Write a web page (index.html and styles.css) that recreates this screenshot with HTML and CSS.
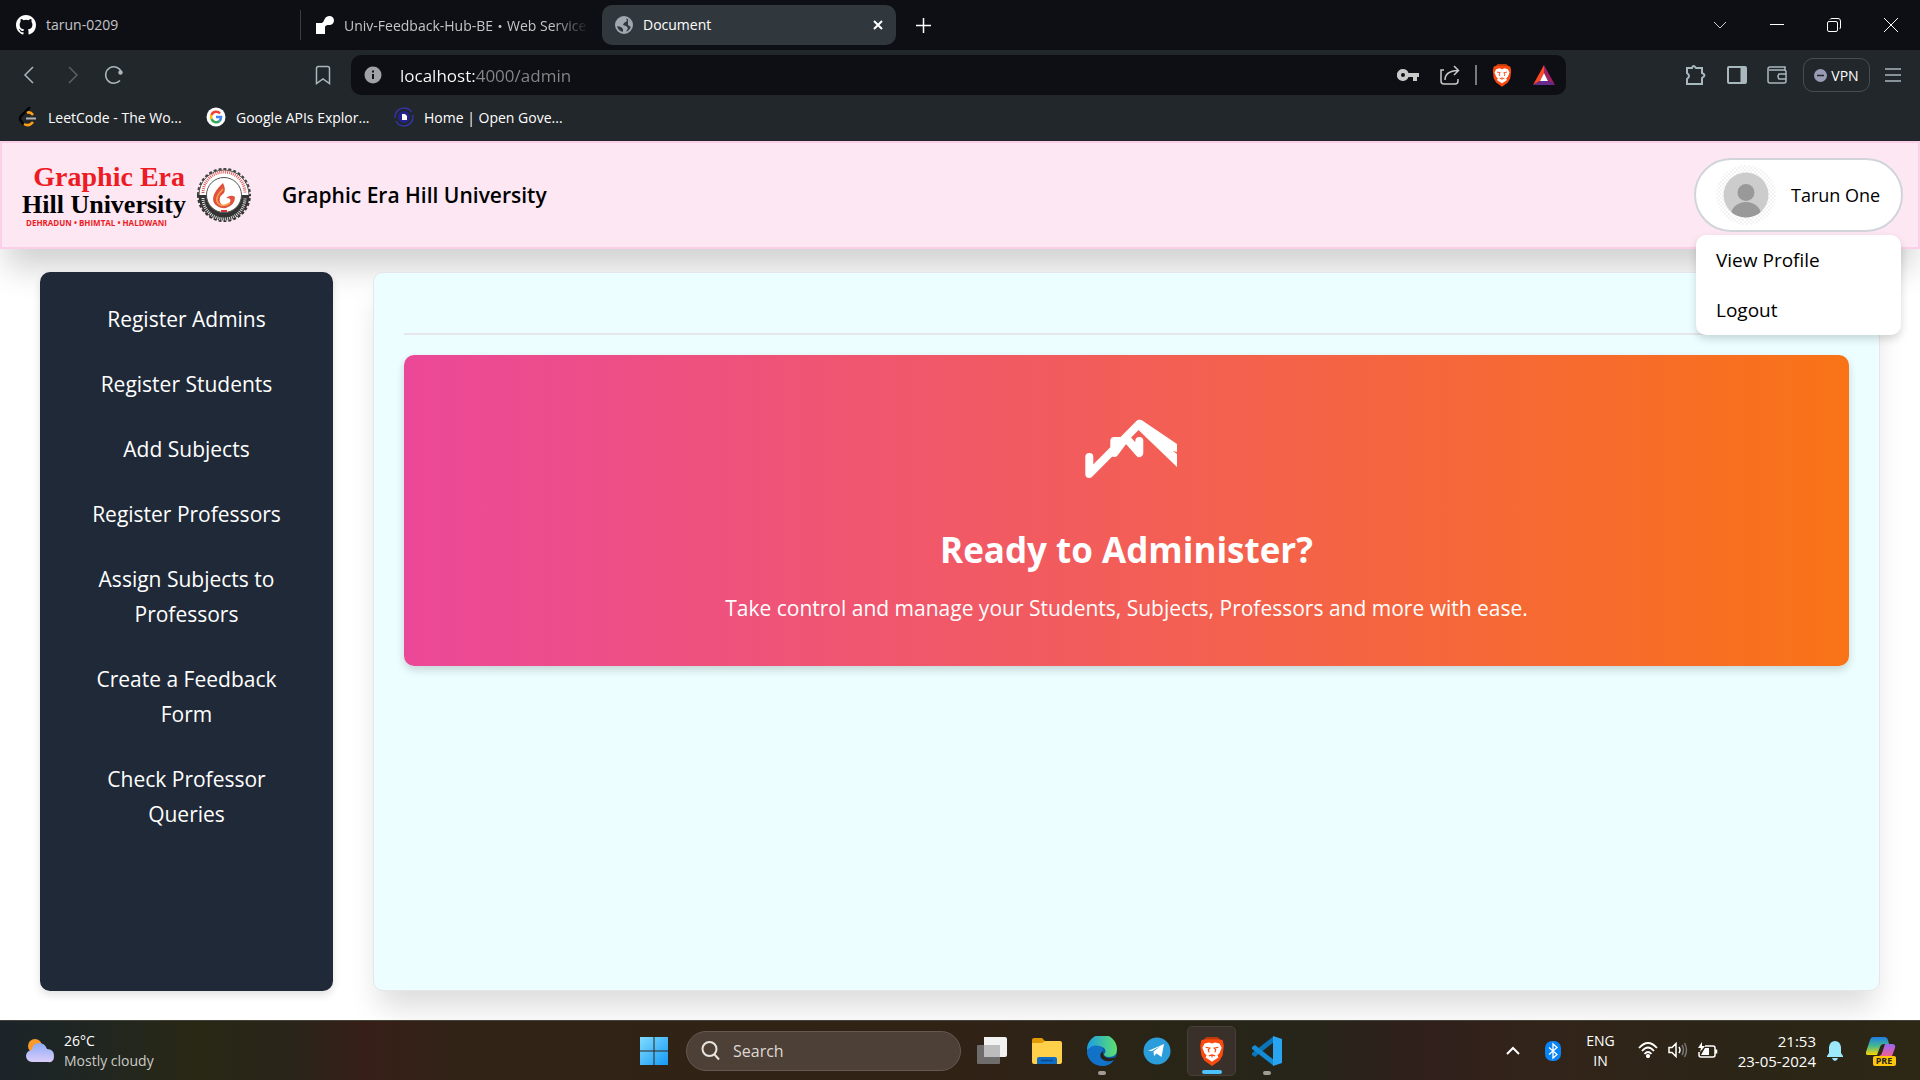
FILE: index.html
```html
<!DOCTYPE html>
<html lang="en">
<head>
<meta charset="utf-8">
<meta name="viewport" content="width=device-width, initial-scale=1">
<title>Document</title>
<link rel="stylesheet" href="styles.css">
</head>
<body>
<svg width="0" height="0" class="defs" aria-hidden="true">
  <symbol id="lion" viewBox="0 0 24 28">
    <path d="M7 1h10l2 2 3 1 1 5-1 9-3 5-7 5-7-5-3-5L1 9l1-5 3-1z" fill="#fb4a10"/>
    <path d="M7 1h10l2 2H5z" fill="#b93a08"/>
    <path d="M5 7l4-1 3 1 3-1 4 1 2 4-2 5-2 2 1 2-3 2-3 2-3-2-3-2 1-2-2-2-2-5z" fill="#fff"/>
    <path d="M6 10.500l4 .8-1.500 1.500.8 2.500M18 10.500l-4 .8 1.500 1.500-.8 2.500M9 18.500l3-1 3 1M12 17.500v2.500" fill="none" stroke="#fb4a10" stroke-width="1.100"/>
  </symbol>
</svg>

<header class="browser">
  <div class="tabs">
    <button class="tab tab-first" type="button">
      <svg width="20" height="20" viewBox="0 0 16 16" fill="#fff"><path d="M8 0C3.58 0 0 3.58 0 8c0 3.54 2.29 6.53 5.47 7.59.4.07.55-.17.55-.38 0-.19-.01-.82-.01-1.49-2.01.37-2.53-.49-2.69-.94-.09-.23-.48-.94-.82-1.13-.28-.15-.68-.52-.01-.53.63-.01 1.08.58 1.23.82.72 1.21 1.87.87 2.33.66.07-.52.28-.87.51-1.07-1.78-.2-3.64-.89-3.64-3.95 0-.87.31-1.59.82-2.15-.08-.2-.36-1.02.08-2.12 0 0 .67-.21 2.2.82a7.6 7.6 0 0 1 4 0c1.53-1.04 2.2-.82 2.2-.82.44 1.1.16 1.92.08 2.12.51.56.82 1.27.82 2.15 0 3.07-1.87 3.75-3.65 3.95.29.25.54.73.54 1.48 0 1.07-.01 1.93-.01 2.2 0 .21.15.46.55.38A8 8 0 0 0 16 8c0-4.42-3.58-8-8-8z"/></svg>
      <span class="tab-title">tarun-0209</span>
    </button>
    <button class="tab tab-second" type="button">
      <svg width="18" height="18" viewBox="0 0 18 18" fill="#fff"><path d="M0 7h5c1 0 1.500 0 2.500-1.500C8.500 4 9 0 13.500 0A4.500 4.500 0 0 1 13.500 9C11 9 9 9 9 12v6H0z"/></svg>
      <span class="tab-title fade">Univ-Feedback-Hub-BE<span class="wide-dot">・</span>Web Service</span>
    </button>
    <div class="tab tab-active">
      <svg width="18" height="18" viewBox="0 0 18 18"><circle cx="9" cy="9" r="8" fill="#31383d" stroke="#a3a8b0" stroke-width="2"/><path d="M2 4l5-3 4 1 1 3-3 2-1 2 3 1 2 2-2 4-3 1v-4l-2-2-4-1zM13 3l4 5-1 3-3-2z" fill="#a3a8b0"/></svg>
      <span class="tab-title">Document</span>
      <button class="plain" type="button" aria-label="Close tab"><svg width="10" height="10" viewBox="0 0 10 10" stroke="#fff" stroke-width="2"><path d="M1 1l8 8M9 1l-8 8"/></svg></button>
    </div>
    <button class="plain new-tab" type="button" aria-label="New tab"><svg width="15" height="15" viewBox="0 0 15 15" stroke="#fff" stroke-width="1.500"><path d="M7.500 0v15M0 7.500h15"/></svg></button>
    <div class="window-controls">
      <button class="plain" type="button" aria-label="Search tabs"><svg width="14" height="14" viewBox="0 0 14 14" fill="none" stroke="#ccc"><path d="M1 4l6 6 6-6"/></svg></button>
      <button class="plain" type="button" aria-label="Minimize"><svg width="14" height="14" viewBox="0 0 14 14" stroke="#fff"><path d="M0 6.500h14"/></svg></button>
      <button class="plain" type="button" aria-label="Restore"><svg width="14" height="14" viewBox="0 0 14 14" fill="none" stroke="#fff"><rect x=".5" y="3.500" width="10" height="10" rx="1.500"/><path d="M3 1.500Q3.500.5 5 .5h6Q13.500.5 13.500 3v6q0 1.500-1 2"/></svg></button>
      <button class="plain" type="button" aria-label="Close"><svg width="14" height="14" viewBox="0 0 14 14" stroke="#fff"><path d="M0 0l14 14M14 0L0 14"/></svg></button>
    </div>
  </div>

  <div class="toolbar">
    <div class="nav-buttons">
      <button class="plain" type="button" aria-label="Back"><svg width="20" height="20" viewBox="0 0 20 20" fill="none" stroke="#a9b8bf" stroke-width="1.500"><path d="M13 2l-8 8 8 8"/></svg></button>
      <button class="plain" type="button" aria-label="Forward"><svg width="20" height="20" viewBox="0 0 20 20" fill="none" stroke="#596267" stroke-width="1.500"><path d="M7 2l8 8-8 8"/></svg></button>
      <button class="plain" type="button" aria-label="Reload"><svg width="20" height="20" viewBox="0 0 20 20" fill="none" stroke="#a9b8bf" stroke-width="1.500"><path d="M16 15.500A8.200 8.200 0 1 1 17.500 7"/><circle cx="16.500" cy="7.500" r="2.200" fill="#a9b8bf" stroke="none"/></svg></button>
    </div>
    <button class="plain" type="button" aria-label="Bookmark"><svg width="20" height="20" viewBox="0 0 20 20" fill="none" stroke="#a9b8bf" stroke-width="1.500"><path d="M3.500 18.500v-15q0-2 2-2h9q2 0 2 2v15L10 14z"/></svg></button>
    <div class="address">
      <svg width="18" height="18" viewBox="0 0 18 18"><circle cx="9" cy="9" r="8.500" fill="#9fa2a6"/><path d="M9 8v5M9 4.500v2" stroke="#111217" stroke-width="2"/></svg>
      <input class="url" type="text" value="localhost:4000/admin" aria-label="Address">
      <div class="address-icons">
        <svg width="22" height="14" viewBox="0 0 22 14" fill="#c9c9c9"><path fill-rule="evenodd" d="M6 1a6 6 0 0 1 5.500 4H22v4h-2v4h-4V9h-4.500A6 6 0 1 1 6 1zm0 4a2 2 0 1 0 0 4 2 2 0 0 0 0-4z"/></svg>
        <svg width="20" height="20" viewBox="0 0 20 20" fill="none" stroke="#c9c9c9" stroke-width="1.500"><path d="M4 5H1v11q0 3 3 3h11q3 0 3-3v-2M5 15q0-9 13-9.500M14 1l4.500 4.500L14 10"/></svg>
        <span class="divider"></span>
        <svg width="20" height="24"><use href="#lion"/></svg>
        <svg width="22" height="20" viewBox="0 0 22 20"><path d="M11 0L0 20l7-4 4-8z" fill="#ff4724"/><path d="M11 0l11 20-7-4-4-8z" fill="#9e1f63"/><path d="M0 20h22l-7-4H7z" fill="#662d91"/><path d="M11 8l4 8H7z" fill="#fff"/></svg>
      </div>
    </div>
    <div class="extensions">
      <svg width="22" height="22" viewBox="0 0 22 22" fill="none" stroke="#a9b8bf" stroke-width="2"><path d="M2 4h5q1-4 4 0h6v5q5 2 0 5v6H2v-5q4-3 0-6z"/></svg>
      <svg width="20" height="18" viewBox="0 0 20 18" fill="none" stroke="#a9b8bf" stroke-width="2"><rect x="1" y="1" width="18" height="16" rx="1"/><path d="M16 1v16" stroke-width="5"/></svg>
      <svg width="20" height="18" viewBox="0 0 20 18" fill="none" stroke="#a9b8bf" stroke-width="1.500"><path d="M18 4V1H3Q1 1 1 3v12q0 2 2 2h14q2 0 2-2V6q0-2-2-2H2M19 8h-7q-2 2.500 0 5h7"/></svg>
      <button class="vpn" type="button"><svg width="13" height="13" viewBox="0 0 13 13"><circle cx="6.500" cy="6.500" r="6.500" fill="#9a9bb5"/><path d="M3 6.500h7" stroke="#22272b" stroke-width="1.500"/></svg>VPN</button>
      <button class="plain" type="button" aria-label="Menu"><svg width="16" height="14" viewBox="0 0 16 14" stroke="#a9b8bf" stroke-width="1.500"><path d="M0 1h16M0 7h16M0 13h16"/></svg></button>
    </div>
  </div>

  <nav class="bookmarks">
    <a href="#"><svg width="20" height="20" viewBox="0 0 20 20" fill="none" stroke-width="2.500"><path d="M12 0L3 9q-2 3 0 5l3 4" stroke="#050505"/><path d="M9 6q3-2 6 2M6 17q5 3 9-2" stroke="#ffa116"/><path d="M8 11.500h10" stroke="#b3b3b3" stroke-width="2"/></svg>LeetCode - The Wo...</a>
    <a href="#"><svg width="20" height="20" viewBox="0 0 20 20" fill="none" stroke-width="2.500"><circle cx="10" cy="10" r="9.500" fill="#fff"/><path d="M14 6.500A5 5 0 0 0 5.500 8" stroke="#ea4335"/><path d="M5.500 8q-1 2 0 4" stroke="#fbbc05"/><path d="M5.500 12a5 5 0 0 0 8 2" stroke="#34a853"/><path d="M13.500 14q1.500-1.500 1.500-4h-5" stroke="#4285f4"/></svg>Google APIs Explor...</a>
    <a href="#"><svg width="20" height="20" viewBox="0 0 20 20"><circle cx="10" cy="10" r="9" fill="none" stroke="#3434a4" stroke-width="1.500" stroke-dasharray="24 3"/><circle cx="10" cy="10" r="6" fill="#24248c"/><path d="M8 7h3l2 2v4H8z" fill="#fff"/></svg>Home | Open Gove...</a>
  </nav>
</header>

<div class="page">
  <header class="site-header">
    <div class="logo">
      <div class="logo-text">
        <span class="logo-top">Graphic Era</span>
        <span class="logo-main">Hill University</span>
        <span class="logo-places">DEHRADUN • BHIMTAL • HALDWANI</span>
      </div>
      <svg width="54" height="54" viewBox="0 0 54 54" fill="none">
        <circle cx="27" cy="27" r="25" fill="#fff"/>
        <path d="M2 27a25 25 0 0 1 50 0" stroke="#555" stroke-width="1"/>
        <path d="M1 27a26 26 0 0 1 52 0" stroke="#444" stroke-width="2" stroke-dasharray="3 2"/>
        <path d="M1 27a26 26 0 0 0 52 0" stroke="#333" stroke-width="2" stroke-dasharray="3 2"/>
        <path d="M6 25a21 21 0 0 1 42 0" stroke="#e45a5c" stroke-width="3" stroke-dasharray="1 1"/>
        <path d="M6 27a21 21 0 0 0 42 0" stroke="#333" stroke-width="9"/>
        <path d="M6 30a21 21 0 0 0 42 0" stroke="#ddd" stroke-width="3" stroke-dasharray="1 1"/>
        <circle cx="27" cy="27" r="17.500" fill="#fff" stroke="#555"/>
        <path d="M26 15q-13 12-9 20 4 6 12 5 9-3 9-11-4-3-9 1 6 0 4 4-4 6-9 2-4-6 3-11 2-4-1-10z" fill="#e0523d"/>
        <path d="M26 21q-9 9-5 14 4 5 12 0" stroke="#f5a14d" stroke-width="1.500"/>
        <path d="M24 43h6" stroke="#d33" stroke-width="2"/>
      </svg>
    </div>
    <h1 class="site-title">Graphic Era Hill University</h1>
    <div class="account">
      <button class="profile" type="button">
        <svg width="60" height="60" viewBox="0 0 60 60">
          <defs>
            <pattern id="check" width="4" height="4" patternUnits="userSpaceOnUse"><path d="M0 0h2v2H0zM2 2h2v2H2z" fill="#f3f3f3"/></pattern>
            <clipPath id="face"><circle cx="30" cy="30" r="22.500"/></clipPath>
          </defs>
          <circle cx="30" cy="30" r="30" fill="url(#check)"/>
          <g clip-path="url(#face)"><path d="M7 7h46v46H7z" fill="#ccc"/><circle cx="30" cy="27.500" r="8.500" fill="#999"/><ellipse cx="30" cy="50" rx="15" ry="13" fill="#999"/></g>
        </svg>
        Tarun One
      </button>
      <div class="menu">
        <a href="#">View Profile</a>
        <a href="#">Logout</a>
      </div>
    </div>
  </header>

  <div class="content">
    <nav class="sidebar">
      <a href="#">Register Admins</a>
      <a href="#">Register Students</a>
      <a href="#">Add Subjects</a>
      <a href="#">Register Professors</a>
      <a href="#">Assign Subjects to Professors</a>
      <a href="#">Create a Feedback Form</a>
      <a href="#">Check Professor Queries</a>
    </nav>
    <main class="panel">
      <hr class="rule">
      <section class="hero">
        <svg width="100" height="100" viewBox="0 0 100 100" fill="none" stroke="#fff" stroke-width="8" stroke-linecap="round" stroke-linejoin="round">
          <path d="M12.300 57v17L62 24"/>
          <path d="M37.300 41v12l9-12zM50 39l12.300 14V41"/>
          <path d="M59 22q3-4 7-1l34 23v8l-4-1 4 3v13L62 30.500z" fill="#fff" stroke="none"/>
        </svg>
        <h2>Ready to Administer?</h2>
        <p>Take control and manage your Students, Subjects, Professors and more with ease.</p>
      </section>
    </main>
  </div>
</div>

<footer class="taskbar">
  <div class="weather">
    <svg width="28" height="24" viewBox="0 0 28 24"><defs><linearGradient id="cloud" x2="0" y2="1"><stop stop-color="#8cabf7"/><stop offset="1" stop-color="#dccdfa"/></linearGradient></defs><circle cx="9" cy="7" r="7" fill="#f99a2b"/><path d="M6 23a6 6 0 0 1 0-12q1-7 7-7 6 0 8 6 7 0 7 7t-6 6z" fill="url(#cloud)"/></svg>
    <div><div class="temp">26°C</div><div class="sky">Mostly cloudy</div></div>
  </div>
  <div class="apps">
    <button class="plain" type="button" aria-label="Start"><svg width="30" height="30" viewBox="0 0 30 30"><defs><linearGradient id="win" x2="1" y2="1"><stop stop-color="#7fdcff"/><stop offset="1" stop-color="#1699f5"/></linearGradient></defs><path d="M1 1h13.500v13.500H1zM15.500 1H29v13.500H15.500zM1 15.500h13.500V29H1zM15.500 15.500H29V29H15.500z" fill="url(#win)"/></svg></button>
    <label class="search"><svg width="20" height="20" viewBox="0 0 20 20" fill="none" stroke="#e8e4e0" stroke-width="2"><circle cx="8.500" cy="8" r="7"/><path d="M13.500 13.500L18 18.500"/></svg><input type="text" placeholder="Search" aria-label="Search"></label>
    <button class="plain app" type="button" aria-label="Task view"><svg width="30" height="30" viewBox="0 0 30 30"><path d="M7 1h21q2 0 2 2v16q0 2-2 2H7z" fill="#f2f2f2"/><path d="M0 10q0-1 1-1h22v18q0 1-1 1H1q-1 0-1-1z" fill="#757575" fill-opacity=".9"/><path d="M7 9h16v12H7z" fill="#bdbdbd"/></svg></button>
    <button class="plain app" type="button" aria-label="File Explorer"><svg width="30" height="30" viewBox="0 0 30 30"><path d="M0 4q0-2 2-2h8l3 3h6v6H0z" fill="#e09a04"/><path d="M0 7h10l3-2h15q2 0 2 2v19q0 2-2 2H2q-2 0-2-2z" fill="#ffd04a"/><path d="M5 28v-5q0-2 2-2h16q2 0 2 2v5z" fill="#0f6dc5"/><path d="M9 24.500h12" stroke="#0b4a8a" stroke-width="1.500"/></svg></button>
    <button class="plain app" type="button" aria-label="Edge"><svg width="30" height="30" viewBox="0 0 30 30"><defs><linearGradient id="edge"><stop stop-color="#1b9de2"/><stop offset="1" stop-color="#5fe070"/></linearGradient></defs><circle cx="15" cy="15" r="15" fill="#0e59a4"/><path d="M0 14A15 15 0 0 1 30 13q0 8-8 8-5 0-5-3 3-3 0-6Q10 7 0 14z" fill="url(#edge)"/><path d="M0 15q5-7 12-5 4 1 4 5-5 4-1 8 5 4 12 1-4 6-12 6A15 15 0 0 1 0 15z" fill="#1272c8"/><path d="M16 15q-5 4-1 8 5 4 12 1l2-3q-4 2-9 1-5-2-4-7z" fill="#2a2115"/></svg><i class="dot"></i></button>
    <button class="plain app" type="button" aria-label="Telegram"><svg width="28" height="28" viewBox="0 0 28 28"><circle cx="14" cy="14" r="13.500" fill="#2a9dda"/><path d="M5 14L21 7l-2.500 13-5-3.500-2.500 2.500-.5-4.500 7-5.500-8.500 5z" fill="#fff"/></svg></button>
    <button class="plain app app-open" type="button" aria-label="Brave"><svg width="26" height="30"><use href="#lion"/></svg><i class="dot bar"></i></button>
    <button class="plain app" type="button" aria-label="Visual Studio Code"><svg width="30" height="30" viewBox="0 0 30 30"><path d="M22 6L3 21l-3-2v-2L22 0z" fill="#0b73b8"/><path d="M22 24L3 9l-3 2v2l22 17z" fill="#138bd5"/><path d="M21 0l9 3v24l-9 3z" fill="#29a4f1"/></svg><i class="dot"></i></button>
  </div>
  <div class="tray">
    <button class="plain" type="button" aria-label="Hidden icons"><svg width="14" height="9" viewBox="0 0 14 9" fill="none" stroke="#fff" stroke-width="2"><path d="M1 8l6-6 6 6"/></svg></button>
    <svg class="bluetooth" width="16" height="20" viewBox="0 0 16 20"><rect width="16" height="20" rx="7" fill="#0a84f5"/><path d="M4 6.500l8 7-4 3.500V3l4 3.500-8 7" fill="none" stroke="#fff" stroke-width="1.300"/></svg>
    <div class="language">ENG<br>IN</div>
    <div class="status">
      <svg width="20" height="16" viewBox="0 0 20 16" fill="none" stroke="#fff" stroke-width="1.800"><path d="M1 6q9-10 18 0M4 9q6-7 12 0M6.500 12q3.500-4 7 0"/><circle cx="10" cy="14" r="1.200" fill="#fff"/></svg>
      <svg width="20" height="16" viewBox="0 0 20 16" fill="none" stroke="#fff" stroke-width="1.500"><path d="M1 5.500h3l4-4v13l-4-4H1zM11 5q2 3 0 6"/><path d="M14 3q3 5 0 10M16.500 1q4 7 0 14" stroke="#777"/></svg>
      <svg width="20" height="17" viewBox="0 0 20 17" fill="none" stroke="#fff" stroke-width="1.500"><path d="M7 4h8q2 0 2 2v7q0 2-2 2H3q-2 0-2-2v-3M18.500 7.500v4"/><path d="M4 0L0 6h3L2 10l5-6H4zM3 13l4-7h4v7z" fill="#fff" stroke="none"/></svg>
    </div>
    <div class="clock">21:53<br>23-05-2024</div>
    <svg class="bell" width="16" height="20" viewBox="0 0 16 20" fill="#9be9fb"><path d="M0 15l2-3V6q1-6 6-6t6 6v6l2 3v1H0zM5 17h6q-1 3-3 3t-3-3z"/></svg>
    <svg class="copilot" width="30" height="30" viewBox="0 0 30 30"><defs><linearGradient id="cp" x2="0" y2="1"><stop stop-color="#1f7ce8"/><stop offset=".5" stop-color="#45b98c"/><stop offset="1" stop-color="#ffd500"/></linearGradient><linearGradient id="cq" x2="0" y2="1"><stop stop-color="#9866f5"/><stop offset="1" stop-color="#f25f91"/></linearGradient></defs><path d="M7 1h12q2 0 3 3l1 4h-5q-3 0-4 3l-3 8H2q-3 0-2-3L4 4q1-3 3-3z" fill="url(#cp)"/><path d="M19 8h7q4 0 3 4l-3 8H13q2 0 3-3z" fill="url(#cq)"/><rect x="7" y="20" width="23" height="10" rx="2" fill="#ffc60a"/><text x="18" y="28" text-anchor="middle" class="badge">PRE</text></svg>
  </div>
</footer>
</body>
</html>
```
FILE: styles.css
```css
* { box-sizing: border-box; }

body {
  margin: 0;
  min-height: 100vh;
  display: flex;
  flex-direction: column;
  font-family: "Open Sans", "Noto Sans", "Noto Sans CJK JP", sans-serif;
  background: #fff;
  color: #000;
}

a { color: inherit; text-decoration: none; }
button, input { font: inherit; color: inherit; }
svg { flex: none; display: block; }
.defs { position: absolute; }

.plain {
  display: flex;
  align-items: center;
  justify-content: center;
  padding: 0;
  border: 0;
  background: none;
}

/* Browser window */
.browser { background: #22272b; color: #fff; font-size: 14px; }

.tabs {
  display: flex;
  align-items: center;
  height: 50px;
  background: #0e0f14;
}
.tab {
  display: flex;
  align-items: center;
  gap: 10px;
  height: 40px;
  width: 294px;
  padding: 0 13px;
  border: 0;
  border-radius: 10px;
  background: none;
  color: #c4c5c8;
  line-height: 18px;
  text-align: left;
}
.tab-first { width: 301px; padding-left: 16px; border-right: 1px solid #3a3c40; border-radius: 0; height: 30px; }
.tab-second { width: 301px; padding-left: 15px; }
.tab-title { flex: 1; overflow: hidden; white-space: nowrap; }
.wide-dot { font-family: "Noto Sans CJK JP", sans-serif; }
.fade { mask-image: linear-gradient(90deg, #000 85%, transparent); }
.tab-active { background: #31383d; color: #fff; }
.new-tab { margin-left: 20px; }
.window-controls { display: flex; gap: 43px; margin-left: auto; padding-right: 22px; }

.toolbar {
  display: flex;
  align-items: center;
  height: 50px;
  padding-left: 20px;
}
.nav-buttons { display: flex; gap: 22px; margin-right: 189px; }
.address {
  display: flex;
  align-items: center;
  flex: 1;
  height: 40px;
  margin-left: 18px;
  padding: 0 11px 0 13px;
  border-radius: 10px;
  background: #0e0f14;
}
.url {
  flex: 1;
  min-width: 0;
  margin-left: 18px;
  padding: 0;
  border: 0;
  outline: 0;
  font-size: 17px;
  color: transparent;
  background: linear-gradient(90deg, #fff 76px, #85878b 76px);
  -webkit-background-clip: text;
  background-clip: text;
}
.address-icons { display: flex; align-items: center; gap: 15px; }
.divider { width: 2px; height: 20px; background: #77797d; }
.address-icons svg:first-child { margin-right: 6px; }
.address-icons svg:last-child { margin-left: 6px; }
.extensions {
  display: flex;
  align-items: center;
  gap: 20px;
  padding: 0 19px 0 119px;
}
.vpn {
  display: flex;
  align-items: center;
  justify-content: center;
  gap: 4px;
  width: 67px;
  height: 34px;
  margin: 0 -5px 0 -4px;
  padding: 0;
  border: 1px solid #474d51;
  border-radius: 10px;
  background: none;
}

.bookmarks {
  display: flex;
  align-items: center;
  gap: 18px;
  height: 41px;
  padding: 0 0 7px 18px;
}
.bookmarks a { display: flex; align-items: center; gap: 10px; width: 170px; white-space: nowrap; }

/* University site */
.page { flex: 1; display: flex; flex-direction: column; }

.site-header {
  display: flex;
  align-items: center;
  height: 108px;
  padding: 0 15px 0 20px;
  border: 2px solid #fbcfe8;
  background: #fce7f3;
  box-shadow: 0 25px 30px -6px rgba(0, 0, 0, .18);
}
.logo { display: flex; align-items: center; gap: 12px; }
.logo-text {
  display: flex;
  flex-direction: column;
  width: 163px;
  font: bold 26px/26px "Liberation Serif", serif;
}
.logo-top { align-self: flex-end; font-size: 28px; line-height: 30px; color: #ed1c24; }
.logo-main { white-space: nowrap; }
.logo-places {
  padding-left: 4px;
  font: bold 8px/10px "Open Sans", sans-serif;
  color: #ed1c24;
  white-space: nowrap;
}
.site-title { margin: 0 0 0 31px; font-size: 21px; font-weight: 600; line-height: 30px; }

.account { position: relative; margin-left: auto; }
.profile {
  display: flex;
  align-items: center;
  gap: 15px;
  width: 209px;
  height: 74px;
  padding: 0 0 0 20px;
  border: 2px solid #d1d5db;
  border-radius: 37px;
  background: #fff;
  font-size: 18px;
  white-space: nowrap;
}
.menu {
  position: absolute;
  z-index: 2;
  top: 77px;
  left: 2px;
  right: 2px;
  border-radius: 10px;
  background: #fff;
  box-shadow: 0 4px 8px rgba(0, 0, 0, .16);
}
.menu a { display: block; padding: 10px 20px; font-size: 19px; line-height: 30px; }

.content {
  flex: 1;
  display: grid;
  grid-template-columns: 293px 1fr;
  gap: 40px;
  padding: 23px 40px 29px;
}
.sidebar {
  display: flex;
  flex-direction: column;
  gap: 30px;
  padding: 30px 40px;
  border-radius: 10px;
  background: #1f2937;
  box-shadow: 0 4px 8px rgba(0, 0, 0, .12);
  color: #fff;
  font-size: 21px;
  line-height: 35px;
  text-align: center;
}
.panel {
  padding: 60px 30px 30px;
  border: 1px solid #e5e7eb;
  border-radius: 10px;
  background: #ecfeff;
  box-shadow: 0 22px 30px -6px rgba(0, 0, 0, .14);
}
.rule { margin: 0 0 20px; border: 0; border-top: 2px solid #e5e7eb; }
.hero {
  display: flex;
  flex-direction: column;
  align-items: center;
  padding: 45px 30px 40px;
  border-radius: 10px;
  background: linear-gradient(90deg, #ec4899, #f97316);
  box-shadow: 0 4px 8px rgba(0, 0, 0, .16);
  color: #fff;
  text-align: center;
}
.hero h2 { margin: 25px 0 16px; font-size: 35px; font-weight: 700; line-height: 50px; }
.hero p { margin: 0; font-size: 21px; line-height: 35px; }

/* Desktop taskbar */
.taskbar {
  display: grid;
  grid-template-columns: 1fr auto 1fr;
  align-items: center;
  height: 60px;
  border-top: 1px solid #444339;
  background: linear-gradient(90deg, #1b2429 0%, #202621 5%, #292815 10%, #29251a 15%, #371f18 19%, #322317 24%, #312216 50%, #292516 60%, #26251a 68%, #301f1b 74%, #33241a 80%, #2b2517 90%, #2d2716 100%);
  color: #fff;
  font-size: 14px;
  line-height: 20px;
}
.weather { display: flex; align-items: center; gap: 10px; padding-left: 26px; }
.sky { color: #cbcbc6; }
.apps { display: flex; align-items: center; padding-left: 10px; }
.search {
  display: flex;
  align-items: center;
  gap: 12px;
  width: 275px;
  height: 40px;
  margin: 0 6px 0 17px;
  padding: 0 14px;
  border: 1px solid #655850;
  border-radius: 20px;
  background: #4d4037;
}
.search input { flex: 1; min-width: 0; padding: 0; border: 0; outline: 0; background: none; font-size: 16px; }
.search input::placeholder { color: #ddd8d4; opacity: 1; }
.app { position: relative; width: 49px; height: 50px; margin-right: 6px; }
.app:last-child { margin-right: 0; }
.app-open { border: 1px solid #46403a; border-radius: 5px; background: #393029; }
.dot {
  position: absolute;
  bottom: 1px;
  left: calc(50% - 4px);
  width: 8px;
  height: 4px;
  border-radius: 2px;
  background: #a09c94;
}
.bar { left: calc(50% - 10px); width: 20px; background: #4cc2ff; }
.tray { display: flex; align-items: center; justify-content: flex-end; padding-right: 24px; }
.bluetooth { margin-left: 25px; }
.language { margin-left: 25px; text-align: center; }
.status { display: flex; gap: 10px; margin-left: 23px; }
.clock { margin-left: 20px; font-size: 15px; text-align: right; }
.bell { margin-left: 11px; }
.copilot { margin-left: 23px; }
.badge { font: bold 9px "Open Sans", sans-serif; fill: #222; }
```
